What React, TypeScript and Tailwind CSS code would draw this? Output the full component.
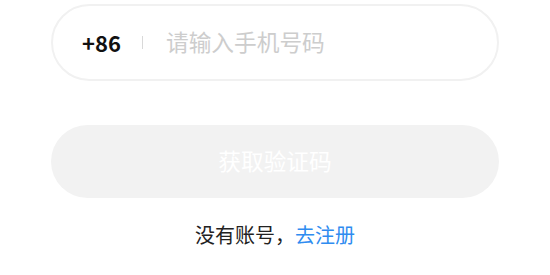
export default function App() {
  return (
    <div className="w-[550px] h-[275px] bg-white px-[51px] pt-[4px]" style={{ fontFamily: '"Noto Sans CJK SC", "Noto Sans", sans-serif' }}>
      <div className="h-[77px] rounded-full border-2 border-[#f1f1f1] flex items-center pl-[29px]">
        <span className="text-[22px] font-semibold text-[#111]">+86</span>
        <span className="ml-[21px] w-px h-[13px] bg-[#d9d9d9]" />
        <input
          className="ml-[23px] flex-1 bg-transparent outline-none text-[22.7px] placeholder:text-[#cdcdcd]"
          placeholder="请输入手机号码"
        />
      </div>
      <button className="mt-[44px] w-[448px] h-[73px] rounded-full bg-[#f2f2f2] text-white text-[22.7px]">
        获取验证码
      </button>
      <div className="mt-[22px] text-center text-[20px] text-[#222]">
        没有账号，<span className="text-[#2f8cf0]">去注册</span>
      </div>
    </div>
  )
}
